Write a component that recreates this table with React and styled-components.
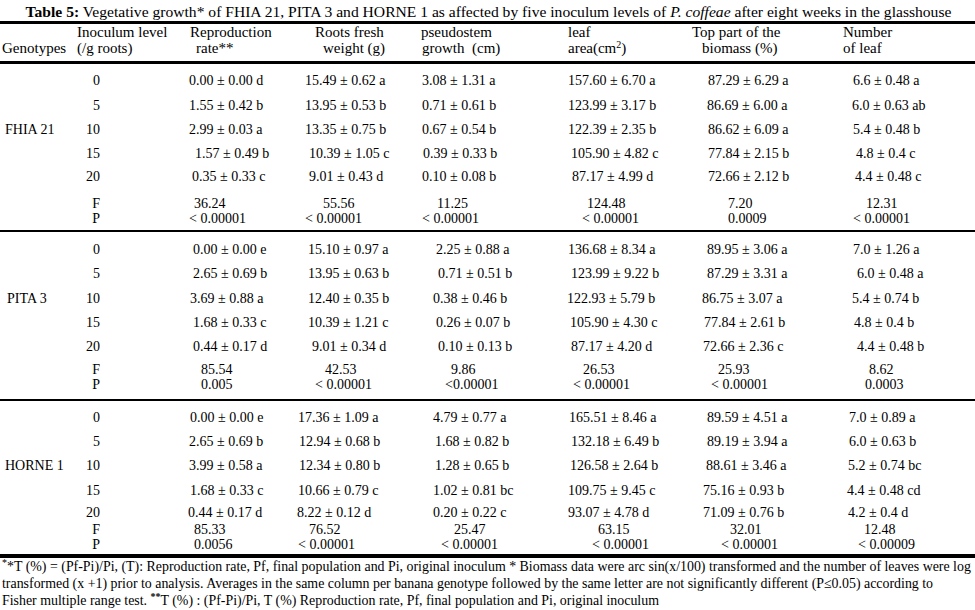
import React from 'react';
import styled, { createGlobalStyle } from 'styled-components';

const GlobalStyle = createGlobalStyle`
  html, body {
    margin: 0;
    padding: 0;
    background: #fff;
  }
  body {
    font-family: "Liberation Serif", "Times New Roman", serif;
    color: #000;
  }
`;

// left edge (px) of every column, page coordinates
const colStarts = [0, 70, 186, 296, 420, 566, 690, 840];
const gridCols = '70px 116px 110px 124px 146px 124px 150px 135px';

const headers = [
  [['', 0], ['Genotypes', 2]],
  [['Inoculum level', 77], ['(/g roots)', 77]],
  [['Reproduction', 190], ['rate**', 196]],
  [['Roots fresh', 315], ['weight (g)', 323]],
  [['pseudostem', 421], ['growth\u00a0 (cm)', 422]],
  [['leaf', 568], ['area(cm', 568, '2', ')']],
  [['Top part of the', 692], ['biomass (%)', 702]],
  [['Number', 843], ['of leaf', 843]],
];

const groups = [
  {
    name: 'FHIA 21',
    nameX: 5,
    padBottom: 4,
    rule: 2,
    rows: [
      ['0', 9, [[189, '0.00 ± 0.00 d'], [305, '15.49 ± 0.62 a'], [422, '3.08 ± 1.31 a'], [568, '157.60 ± 6.70 a'], [708, '87.29 ± 6.29 a'], [853, '6.6 ± 0.48 a']]],
      ['5', 10, [[189, '1.55 ± 0.42 b'], [305, '13.95 ± 0.53 b'], [422, '0.71 ± 0.61 b'], [568, '123.99 ± 3.17 b'], [707, '86.69 ± 6.00 a'], [852, '6.0 ± 0.63 ab']]],
      ['10', 9, [[189, '2.99 ± 0.03 a'], [305, '13.35 ± 0.75 b'], [422, '0.67 ± 0.54 b'], [568, '122.39 ± 2.35 b'], [708, '86.62 ± 6.09 a'], [853, '5.4 ± 0.48 b']]],
      ['15', 9, [[195, '1.57 ± 0.49 b'], [309, '10.39 ± 1.05 c'], [423, '0.39 ± 0.33 b'], [571, '105.90 ± 4.82 c'], [708, '77.84 ± 2.15 b'], [856, '4.8 ± 0.4 c']]],
      ['20', 8, [[192, '0.35 ± 0.33 c'], [309, '9.01 ± 0.43 d'], [422, '0.10 ± 0.08 b'], [572, '87.17 ± 4.99 d'], [708, '72.66 ± 2.12 b'], [855, '4.4 ± 0.48 c']]],
      ['F', 12, [[194, '36.24'], [323, '55.56'], [437, '11.25'], [587, '124.48'], [728, '7.20'], [866, '12.31']]],
      ['P', 0, [[189, '< 0.00001'], [305, '< 0.00001'], [422, '< 0.00001'], [582, '< 0.00001'], [728, '0.0009'], [853, '< 0.00001']]],
    ],
  },
  {
    name: 'PITA 3',
    nameX: 7,
    padBottom: 7,
    rule: 2,
    rows: [
      ['0', 10, [[193, '0.00 ± 0.00 e'], [308, '15.10 ± 0.97 a'], [436, '2.25 ± 0.88 a'], [568, '136.68 ± 8.34 a'], [707, '89.95 ± 3.06 a'], [853, '7.0 ± 1.26 a']]],
      ['5', 9, [[193, '2.65 ± 0.69 b'], [308, '13.95 ± 0.63 b'], [438, '0.71 ± 0.51 b'], [571, '123.99 ± 9.22 b'], [707, '87.29 ± 3.31 a'], [857, '6.0 ± 0.48 a']]],
      ['10', 10, [[190, '3.69 ± 0.88 a'], [308, '12.40 ± 0.35 b'], [433, '0.38 ± 0.46 b'], [567, '122.93 ± 5.79 b'], [702, '86.75 ± 3.07 a'], [852, '5.4 ± 0.74 b']]],
      ['15', 9, [[193, '1.68 ± 0.33 c'], [308, '10.39 ± 1.21 c'], [436, '0.26 ± 0.07 b'], [570, '105.90 ± 4.30 c'], [704, '77.84 ± 2.61 b'], [854, '4.8 ± 0.4 b']]],
      ['20', 9, [[193, '0.44 ± 0.17 d'], [312, '9.01 ± 0.34 d'], [438, '0.10 ± 0.13 b'], [571, '87.17 ± 4.20 d'], [703, '72.66 ± 2.36 c'], [857, '4.4 ± 0.48 b']]],
      ['F', 8, [[201, '85.54'], [325, '42.53'], [451, '9.86'], [583, '26.53'], [718, '25.93'], [869, '8.62']]],
      ['P', 0, [[201, '0.005'], [315, '< 0.00001'], [445, '<0.00001'], [573, '< 0.00001'], [711, '< 0.00001'], [865, '0.0003']]],
    ],
  },
  {
    name: 'HORNE 1',
    nameX: 5,
    padBottom: 2,
    rule: 4,
    rows: [
      ['0', 9, [[190, '0.00 ± 0.00 e'], [298, '17.36 ± 1.09 a'], [433, '4.79 ± 0.77 a'], [569, '165.51 ± 8.46 a'], [707, '89.59 ± 4.51 a'], [849, '7.0 ± 0.89 a']]],
      ['5', 9, [[189, '2.65 ± 0.69 b'], [299, '12.94 ± 0.68 b'], [435, '1.68 ± 0.82 b'], [571, '132.18 ± 6.49 b'], [707, '89.19 ± 3.94 a'], [849, '6.0 ± 0.63 b']]],
      ['10', 9, [[189, '3.99 ± 0.58 a'], [299, '12.34 ± 0.80 b'], [435, '1.28 ± 0.65 b'], [570, '126.58 ± 2.64 b'], [706, '88.61 ± 3.46 a'], [848, '5.2 ± 0.74 bc']]],
      ['15', 10, [[190, '1.68 ± 0.33 c'], [298, '10.66 ± 0.79 c'], [433, '1.02 ± 0.81 bc'], [568, '109.75 ± 9.45 c'], [703, '75.16 ± 0.93 b'], [847, '4.4 ± 0.48 cd']]],
      ['20', 7, [[188, '0.44 ± 0.17 d'], [297, '8.22 ± 0.12 d'], [433, '0.20 ± 0.22 c'], [568, '93.07 ± 4.78 d'], [703, '71.09 ± 0.76 b'], [848, '4.2 ± 0.4 d']]],
      ['F', 2, [[194, '85.33'], [309, '76.52'], [454, '25.47'], [598, '63.15'], [730, '32.01'], [864, '12.48']]],
      ['P', 0, [[194, '0.0056'], [298, '< 0.00001'], [441, '< 0.00001'], [592, '< 0.00001'], [721, '< 0.00001'], [858, '< 0.00009']]],
    ],
  },
];

function App() {
  return (
    <Page>
      <GlobalStyle />
      <Title>
        <b>Table 5:</b> Vegetative growth* of FHIA 21, PITA 3 and HORNE 1 as affected by five inoculum levels of{' '}
        <i>P. coffeae</i> after eight weeks in the glasshouse
      </Title>

      <Head>
        {headers.map((lines, i) => (
          <HeadCell key={i}>
            {lines.map(([text, x, sup, tail], j) => (
              <HeadLine key={j} $pad={Math.max(0, x - colStarts[i])}>
                {text}
                {sup && <Sup>{sup}</Sup>}
                {tail}
              </HeadLine>
            ))}
          </HeadCell>
        ))}
      </Head>

      {groups.map((g) => (
        <Group key={g.name} $padBottom={g.padBottom} $rule={g.rule}>
          {g.rows.map(([level, gap, cells]) => (
            <Row key={level} $gap={gap}>
              <Genotype $pad={g.nameX}>{level === '10' ? g.name : ''}</Genotype>
              <Level>{level}</Level>
              {cells.map(([x, text], k) => (
                <Value key={k} $pad={x - colStarts[k + 2]}>
                  {text}
                </Value>
              ))}
            </Row>
          ))}
        </Group>
      ))}

      <Notes>
        <NoteLine>
          <Sup>*</Sup>*T (%) = (Pf-Pi)/Pi, (T): Reproduction rate, Pf, final population and Pi, original inoculum * Biomass data were arc sin(x/100) transformed and the number of leaves were log
        </NoteLine>
        <NoteLine>
          transformed (x +1) prior to analysis. Averages in the same column per banana genotype followed by the same letter are not significantly different (P≤0.05) according to
        </NoteLine>
        <NoteLine>
          Fisher multiple range test. <Sup $bold>**</Sup>T (%) : (Pf-Pi)/Pi, T (%) Reproduction rate, Pf, final population and Pi, original inoculum
        </NoteLine>
      </Notes>
    </Page>
  );
}

export default App;

const Page = styled.div`
  width: 975px;
  height: 610px;
  overflow: hidden;
  padding-top: 3px;
  box-sizing: border-box;
  font-family: "Liberation Serif", "Times New Roman", serif;
`;

const Title = styled.div`
  font-size: 15.6px;
  line-height: 17px;
  text-align: center;
  white-space: nowrap;
  margin-bottom: 1px;
  padding-left: 2px;
`;

const Head = styled.div`
  display: grid;
  grid-template-columns: ${gridCols};
  height: 37px;
  border-top: 3px solid #000;
  border-bottom: 3px solid #000;
`;

const HeadCell = styled.div`
  display: flex;
  flex-direction: column;
`;

const HeadLine = styled.div`
  font-size: 15px;
  line-height: 16px;
  height: 16px;
  white-space: nowrap;
  padding-left: ${(p) => p.$pad}px;
`;

const Sup = styled.sup`
  font-size: 10px;
  line-height: 0;
  vertical-align: 5px;
  font-weight: ${(p) => (p.$bold ? 700 : 400)};
`;

const Group = styled.div`
  display: flex;
  flex-direction: column;
  padding-bottom: ${(p) => p.$padBottom}px;
  border-bottom: ${(p) => p.$rule}px solid #000;
`;

const Row = styled.div`
  display: grid;
  grid-template-columns: ${gridCols};
  height: 15px;
  margin-top: ${(p) => p.$gap}px;
  font-size: 14px;
  line-height: 15px;
  white-space: nowrap;
`;

const Genotype = styled.div`
  padding-left: ${(p) => p.$pad}px;
`;

const Level = styled.div`
  width: 30px;
  text-align: right;
`;

const Value = styled.div`
  padding-left: ${(p) => p.$pad}px;
`;

const Notes = styled.div`
  padding-left: 2px;
`;

const NoteLine = styled.div`
  font-size: 13.9px;
  line-height: 17px;
  white-space: nowrap;
`;
